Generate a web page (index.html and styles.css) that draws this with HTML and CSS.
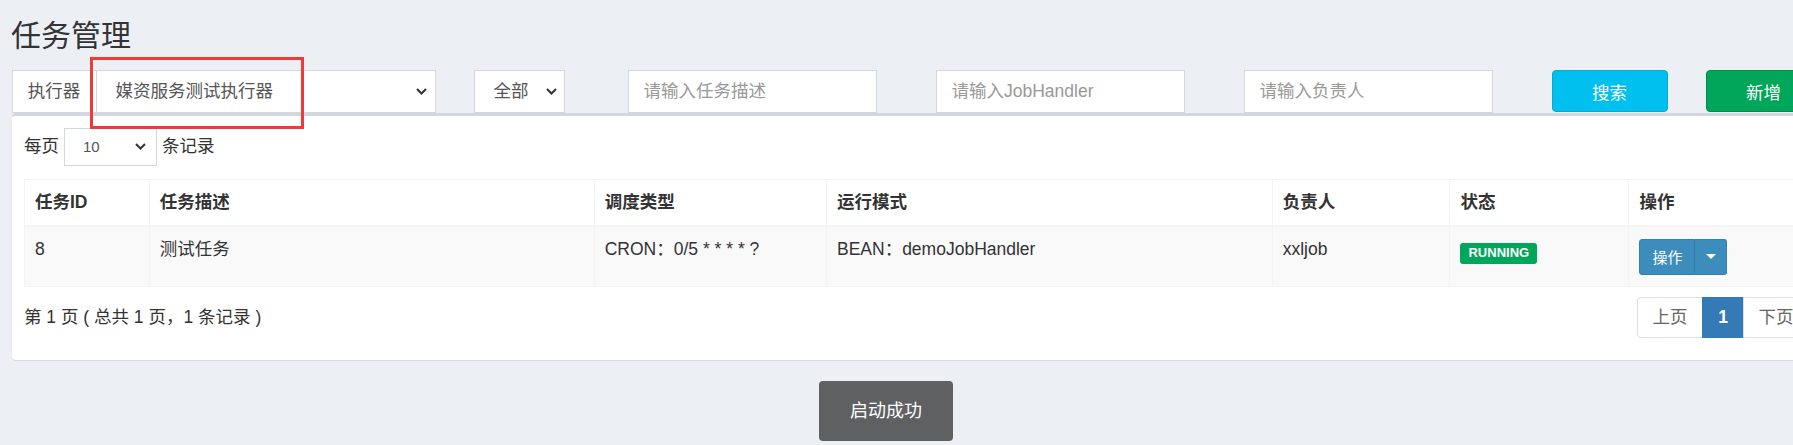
FILE: index.html
```html
<!DOCTYPE html>
<html lang="zh-CN">
<head>
    <meta charset="UTF-8">
    <meta name="viewport" content="width=device-width, initial-scale=1.0">
    <title>任务管理</title>
    <link rel="stylesheet" href="styles.css">
</head>
<body>
    <section class="content-header">
        <h1>任务管理</h1>
    </section>

    <section class="content">
        <div class="filter-row">
            <div class="span-3">
                <div class="input-group">
                    <span class="addon">执行器</span>
                    <div class="select select-group">
                        <span>媒资服务测试执行器</span>
                        <svg class="chevron" width="11" height="7" viewBox="0 0 11 7"><path d="M1 1l4.5 4.5L10 1" fill="none" stroke="#333" stroke-width="2"/></svg>
                    </div>
                </div>
            </div>
            <div class="span-1">
                <div class="select select-status">
                    <span>全部</span>
                    <svg class="chevron" width="11" height="7" viewBox="0 0 11 7"><path d="M1 1l4.5 4.5L10 1" fill="none" stroke="#333" stroke-width="2"/></svg>
                </div>
            </div>
            <div class="span-2">
                <input type="text" class="form-control" placeholder="请输入任务描述">
            </div>
            <div class="span-2">
                <input type="text" class="form-control" placeholder="请输入JobHandler">
            </div>
            <div class="span-2">
                <input type="text" class="form-control" placeholder="请输入负责人">
            </div>
            <div class="span-1">
                <button class="btn btn-info">搜索</button>
            </div>
            <div class="span-1">
                <button class="btn btn-success">新增</button>
            </div>
        </div>

        <div class="box">
            <div class="box-body">
                <div class="length">
                    <span>每页</span>
                    <div class="select select-sm">
                        <span>10</span>
                        <svg class="chevron" width="11" height="7" viewBox="0 0 11 7"><path d="M1 1l4.5 4.5L10 1" fill="none" stroke="#333" stroke-width="2"/></svg>
                    </div>
                    <span>条记录</span>
                </div>

                <table class="job-table">
                    <colgroup>
                        <col class="c-id">
                        <col class="c-desc">
                        <col class="c-type">
                        <col class="c-mode">
                        <col class="c-author">
                        <col class="c-status">
                        <col class="c-op">
                    </colgroup>
                    <thead>
                        <tr>
                            <th>任务ID</th>
                            <th>任务描述</th>
                            <th>调度类型</th>
                            <th>运行模式</th>
                            <th>负责人</th>
                            <th>状态</th>
                            <th>操作</th>
                        </tr>
                    </thead>
                    <tbody>
                        <tr>
                            <td>8</td>
                            <td>测试任务</td>
                            <td>CRON：0/5 * * * * ?</td>
                            <td>BEAN：demoJobHandler</td>
                            <td>xxljob</td>
                            <td><span class="label-running">RUNNING</span></td>
                            <td>
                                <div class="btn-group">
                                    <button class="btn-op">操作</button>
                                    <button class="btn-op btn-caret"><span class="caret"></span></button>
                                </div>
                            </td>
                        </tr>
                    </tbody>
                </table>

                <div class="table-footer">
                    <div class="info">第 1 页 ( 总共 1 页，1 条记录 )</div>
                    <ul class="pagination">
                        <li><a>上页</a></li>
                        <li class="active"><a>1</a></li>
                        <li><a>下页</a></li>
                    </ul>
                </div>
            </div>
        </div>
    </section>

    <div class="red-mark"></div>
    <div class="toast">启动成功</div>
</body>
</html>
```

FILE: styles.css
```css
html, body {
    overflow: hidden;
}

body {
    margin: 0;
    background-color: #ecf0f5;
    font-family: "Liberation Sans", "Noto Sans CJK SC", sans-serif;
    font-size: 17.5px;
    line-height: 25px;
    color: #333;
    width: 1793px;
    height: 445px;
    position: relative;
}

.content-header {
    padding: 19px 0 0 11px;
}

.content-header h1 {
    margin: 0;
    font-size: 30px;
    line-height: 33px;
    font-weight: normal;
    color: #333;
}

.content {
    padding: 18px 0 0 11.5px;
    width: 1810px;
}

/* filter bar */
.filter-row {
    display: grid;
    grid-template-columns: repeat(12, 116px);
    column-gap: 38px;
}

.span-1 { grid-column: span 1; }
.span-2 { grid-column: span 2; }
.span-3 { grid-column: span 3; }

.input-group {
    display: flex;
    height: 42.5px;
}

.addon {
    box-sizing: border-box;
    width: 84px;
    border: 1px solid #d2d6de;
    border-right: none;
    background: #fff;
    color: #555;
    display: flex;
    align-items: center;
    justify-content: center;
}

.select {
    box-sizing: border-box;
    height: 42.5px;
    border: 1px solid #d2d6de;
    background: #fff;
    color: #555;
    display: flex;
    align-items: center;
    justify-content: space-between;
}

.select-group {
    flex: 1;
    padding: 0 8px 0 19px;
}

.select-status {
    width: 91.5px;
    padding: 0 7px 0 19px;
}

.select-sm {
    width: 93px;
    height: 37.5px;
    padding: 0 10px 0 18px;
    font-size: 15px;
}

.form-control {
    box-sizing: border-box;
    width: 249px;
    height: 42.5px;
    border: 1px solid #d2d6de;
    padding: 0 15px;
    font-family: inherit;
    font-size: 17.5px;
    color: #555;
    outline: none;
}

.form-control::placeholder {
    color: #999;
}

.btn {
    box-sizing: border-box;
    width: 116px;
    height: 42px;
    border-radius: 4px;
    border: 1px solid transparent;
    color: #fff;
    font-family: inherit;
    font-size: 17.5px;
}

.btn-info {
    background-color: #00c0ef;
    border-color: #00acd6;
}

.btn-success {
    background-color: #00a65a;
    border-color: #008d4c;
}

/* box */
.box {
    margin-top: 0;
    background: #fff;
    border-top: 3.75px solid #d2d6de;
    border-radius: 4px;
    box-shadow: 0 1px 1px rgba(0, 0, 0, 0.1);
}

.box-body {
    padding: 12.5px 12.5px 22px 12.5px;
}

.length {
    display: flex;
    align-items: center;
    gap: 5px;
}

.job-table {
    margin-top: 13px;
    width: 100%;
    border-collapse: collapse;
    table-layout: fixed;
    border: 1px solid #f4f4f4;
}

.c-id { width: 124.7px; }
.c-desc { width: 445px; }
.c-type { width: 232.3px; }
.c-mode { width: 445.7px; }
.c-author { width: 177.8px; }
.c-status { width: 179px; }
.c-op { width: 180.5px; }

.job-table th,
.job-table td {
    border: 1px solid #f4f4f4;
    padding: 10px;
    text-align: left;
    vertical-align: top;
}

.job-table th {
    font-weight: bold;
    border-bottom-width: 2.5px;
    padding-bottom: 10px;
}

.job-table tbody tr {
    background-color: #f9f9f9;
}

.job-table td {
    height: 39px;
}

.label-running {
    display: inline-block;
    margin-top: 6px;
    background-color: #00a65a;
    color: #fff;
    font-weight: bold;
    font-size: 13px;
    line-height: 14px;
    padding: 3px 8px 4px;
    border-radius: 3px;
}

.btn-group {
    display: flex;
    margin-top: 2px;
}

.btn-op {
    height: 36px;
    padding: 0 12px;
    background-color: #3c8dbc;
    border: 1px solid #367fa9;
    color: #fff;
    font-family: inherit;
    font-size: 15px;
    border-radius: 3px 0 0 3px;
}

.btn-caret {
    width: 31.5px;
    padding: 0;
    border-left: none;
    border-radius: 0 3px 3px 0;
    display: flex;
    align-items: center;
    justify-content: center;
}

.caret {
    width: 0;
    height: 0;
    border-top: 5px solid #fff;
    border-left: 5px solid transparent;
    border-right: 5px solid transparent;
}

.table-footer {
    display: flex;
    justify-content: space-between;
    align-items: flex-start;
    margin-top: 10px;
}

.info {
    padding-top: 8px;
}

.pagination {
    display: flex;
    list-style: none;
    margin: 0;
    padding: 0;
}

.pagination a {
    display: block;
    box-sizing: border-box;
    height: 41.5px;
    line-height: 39.5px;
    padding: 0 14.5px;
    border: 1px solid #ddd;
    margin-left: -1px;
    color: #666;
    background: #fff;
}

.pagination li:first-child a {
    border-radius: 4px 0 0 4px;
    margin-left: 0;
}

.pagination li:last-child a {
    border-radius: 0 4px 4px 0;
}

.pagination .active a {
    width: 42px;
    padding: 0;
    text-align: center;
    background-color: #337ab7;
    border-color: #337ab7;
    color: #fff;
    font-weight: bold;
}

/* overlays */
.red-mark {
    position: absolute;
    left: 90px;
    top: 57px;
    width: 208px;
    height: 66px;
    border: 3px solid #ef3a3a;
}

.toast {
    position: absolute;
    left: 819px;
    top: 381px;
    padding: 0 31px;
    line-height: 60px;
    font-size: 18px;
    color: #fff;
    background-color: #5f6062;
    border-radius: 4px;
}
```
